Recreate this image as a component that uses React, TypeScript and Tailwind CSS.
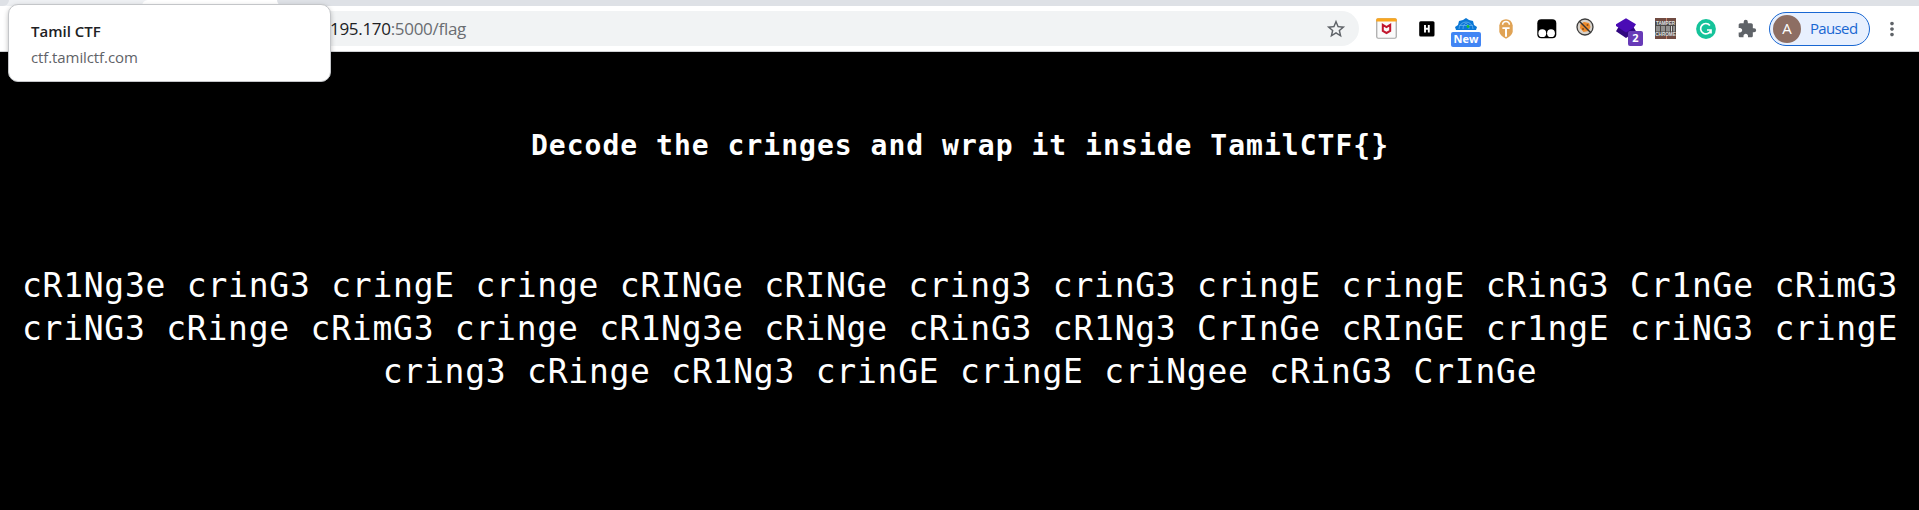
import React from "react";
import { MdStarBorder, MdExtension, MdMoreVert } from "react-icons/md";

const lines = [
  "cR1Ng3e crinG3 cringE cringe cRINGe cRINGe cring3 crinG3 cringE cringE cRinG3 Cr1nGe cRimG3",
  "criNG3 cRinge cRimG3 cringe cR1Ng3e cRiNge cRinG3 cR1Ng3 CrInGe cRInGE cr1ngE criNG3 cringE",
  "cring3 cRinge cR1Ng3 crinGE cringE criNgee cRinG3 CrInGe",
];

function McAfee() {
  return (
    <svg width="22" height="22" viewBox="0 0 22 22">
      <rect x=".75" y=".75" width="19.5" height="19.5" rx="1.5" fill="#fbfbfb" stroke="#a5a5a5" strokeWidth="1.2" />
      <path d="M.2 3.500V1.800A1.500 1.500 0 0 1 1.700.3h17.600a1.500 1.500 0 0 1 1.500 1.500v1.700z" fill="#fba61c" />
      <path d="M6.800 6.800 10.500 9 14.200 6.800V13L10.500 15 6.800 13z" fill="none" stroke="#c2182e" strokeWidth="2" />
    </svg>
  );
}

function HBadge() {
  return (
    <svg width="16" height="16" viewBox="0 0 16 16">
      <rect x=".2" y=".2" width="15.300" height="15.300" rx="1.500" fill="#000" />
      <path d="M6 4v7.500M9.800 4v7.500M6 7.800h4" stroke="#fff" strokeWidth="1.900" fill="none" />
    </svg>
  );
}

function Globe() {
  return (
    <svg width="22" height="22" viewBox="0 0 22 22">
      <path d="M1 12 0 9l3-2 1-4 4-1 3-2 3 2 4 1 1 4 3 2-1 3z" fill="#0a77d5" />
      <path d="M4 11a7 7 0 0 1 14 0M8 11c0-3 1-5 3-6 2 1 3 3 3 6M4 7.500h14" stroke="#64b0ef" strokeWidth=".8" fill="none" />
      <circle cx="13" cy="8.500" r="1.400" fill="#19c431" />
    </svg>
  );
}

function Lock() {
  return (
    <svg width="14" height="20" viewBox="0 0 14 20">
      <path d="M.3 6.500Q1.500.3 7 .3t6.700 6.200V13Q12.500 17 7 19.700 1.500 17 .3 13z" fill="#e0a355" />
      <path d="M3.600 5.800a3.400 3.400 0 0 1 6.800 0" fill="none" stroke="#fff" strokeWidth="1.500" />
      <path d="M3.400 8.200h7.200v1.900H8v7.700H6v-7.700H3.400z" fill="#fff" />
    </svg>
  );
}

function TwoDots() {
  return (
    <svg width="20" height="20" viewBox="0 0 20 20">
      <rect x=".3" y=".3" width="19" height="19" rx="4" fill="#000" />
      <circle cx="5.300" cy="14.200" r="3.900" fill="#fff" />
      <circle cx="14" cy="14.200" r="3.900" fill="#fff" />
    </svg>
  );
}

function NoCookie() {
  return (
    <svg width="18" height="18" viewBox="0 0 18 18">
      <circle cx="9" cy="9" r="8" fill="#d8d2ca" stroke="#3d3d3d" strokeWidth="1.300" />
      <path d="M4.500 6 8 4l5 1 1.500 4-2 4-5 1-3.500-4z" fill="#ed8b2c" />
      <circle cx="11.500" cy="7" r="1" fill="#8a4b13" />
      <circle cx="7" cy="11" r="1" fill="#8a4b13" />
      <path d="m3.300 3.300 11.500 11.500" stroke="#333" strokeWidth="1.400" />
    </svg>
  );
}

function Layers() {
  return (
    <svg width="22" height="22" viewBox="0 0 22 22">
      <path d="M0 13.300 2.500 9h15l2.500 4.300L10 20z" fill="#30077f" />
      <path d="M0 6.300 10 .3l10 6L17.500 10 10 14.500 0 8z" fill="#4a0bb5" />
    </svg>
  );
}

function Tamper() {
  return (
    <svg width="21" height="21" viewBox="0 0 21 21" className="overflow-visible">
      <rect width="21" height="21" fill="#704b42" />
      <path d="M11.500 0v3M11.500 18v3" stroke="#c98268" />
      <rect y="3" width="21" height="15" fill="#4b4846" />
      <path d="M2 8v5.500M4 8v5.500M7 8v5.500M9 8v5.500M12 8v5.500M14 8v5.500M16.500 8v5.500M19 8v5.500" stroke="#d8d8d8" strokeWidth="1" />
      <text x="10.500" y="7.300" textAnchor="middle" fontSize="4.600" fontWeight="700" fontFamily="Liberation Sans, sans-serif" fill="#e3e3e3">TAMPER</text>
      <text x="10.500" y="17.500" textAnchor="middle" fontSize="4.600" fontWeight="700" fontFamily="Liberation Sans, sans-serif" fill="#e3e3e3">CHROME</text>
    </svg>
  );
}

function Grammarly() {
  return (
    <svg width="20" height="20" viewBox="0 0 20 20">
      <circle cx="10" cy="10" r="9.900" fill="#15c39a" />
      <path d="M13.900 6.500A5.200 5.200 0 1 0 14.800 11.200M11 11h4v3.500" fill="none" stroke="#fff" strokeWidth="1.700" />
    </svg>
  );
}

export default function App() {
  return (
    <div className="relative flex h-[510px] w-[1919px] flex-col overflow-hidden bg-black font-['Open_Sans','Noto_Sans',sans-serif]">
      <div className="flex h-[6px] shrink-0 bg-[#eef0f3]">
        <div className="h-full w-[9px] rounded-br-[8px] bg-[#dee1e6]" />
        <div className="h-full w-[133px] rounded-br-[8px] bg-[#eef0f3]" />
        <div className="h-full w-[135px] rounded-tl-[8px] bg-white" />
        <div className="h-full grow bg-white">
          <div className="h-full rounded-bl-[8px] bg-[#dee1e6]" />
        </div>
      </div>
      <div className="flex h-[46px] shrink-0 items-center border-b border-[#cfd1d4] bg-white">
        <div className="ml-[118px] flex h-[35px] w-[1241px] items-center justify-between rounded-full bg-[#f1f3f4] pr-[12px] pl-[212px]">
          <span className="text-[17px] leading-none tracking-[-0.3px] text-[#202124]">
            195.170<span className="text-[#6a6d71]">:5000/flag</span>
          </span>
          <MdStarBorder size={22} className="text-[#5f6368]" />
        </div>
        <div className="ml-[17px] flex w-[22px]"><McAfee /></div>
        <div className="ml-[21px] flex w-[16px]"><HBadge /></div>
        <div className="relative ml-[20px] flex w-[22px]">
          <Globe />
          <span className="absolute top-[14px] -left-[4px] flex h-[15px] w-[30px] items-center justify-center rounded-[2px] bg-[#4285f4] text-[11px] font-bold text-white">New</span>
        </div>
        <div className="ml-[22px] flex w-[14px]"><Lock /></div>
        <div className="ml-[24px] flex w-[20px]"><TwoDots /></div>
        <div className="ml-[19px] flex w-[18px] pb-[3px]"><NoCookie /></div>
        <div className="relative ml-[22px] flex w-[22px]">
          <Layers />
          <span className="absolute top-[13px] left-[12px] flex size-[15px] items-center justify-center rounded-[2px] bg-[#673ab7] text-[11px] font-bold text-white">2</span>
        </div>
        <div className="ml-[17px] flex w-[21px]"><Tamper /></div>
        <div className="ml-[20px] flex w-[20px]"><Grammarly /></div>
        <div className="ml-[21px] flex w-[20px]"><MdExtension size={20} className="shrink-0 text-[#5f6368]" /></div>
        <div className="ml-[12px] flex h-[34px] w-[101px] items-center rounded-full border border-[#1967d2] bg-[#e8f0fe] pl-[3px]">
          <div className="flex size-[28px] items-center justify-center rounded-full bg-[#8d6e63] text-[15px] text-white">A</div>
          <span className="ml-[9px] text-[15px] leading-none tracking-[-0.65px] text-[#1967d2]">Paused</span>
        </div>
        <MdMoreVert size={22} className="ml-[11px] text-[#5f6368]" />
      </div>
      <main className="flex flex-col items-center font-['DejaVu_Sans_Mono',monospace] whitespace-pre text-white">
        <h1 className="mt-[75px] pl-[1px] text-[28px] leading-[38px] font-bold tracking-[1.02px]">
          Decode the cringes and wrap it inside TamilCTF{"{}"}
        </h1>
        <div className="mt-[99px] pl-[1px] text-center text-[33px] leading-[43px] tracking-[0.75px]">
          {lines.map((line) => (
            <p key={line}>{line}</p>
          ))}
        </div>
      </main>
      <div className="absolute top-[4px] left-[8px] h-[78px] w-[323px] rounded-[10px] border border-[#c4c6c9] bg-white px-[22px] pt-[17px] shadow-[0_2px_5px_rgba(0,0,0,0.25)]">
        <div className="text-[15px] leading-[19px] font-semibold text-[#202124]">Tamil CTF</div>
        <div className="mt-[7px] text-[15px] leading-[19px] tracking-[-0.1px] text-[#5f6368]">ctf.tamilctf.com</div>
      </div>
    </div>
  );
}
